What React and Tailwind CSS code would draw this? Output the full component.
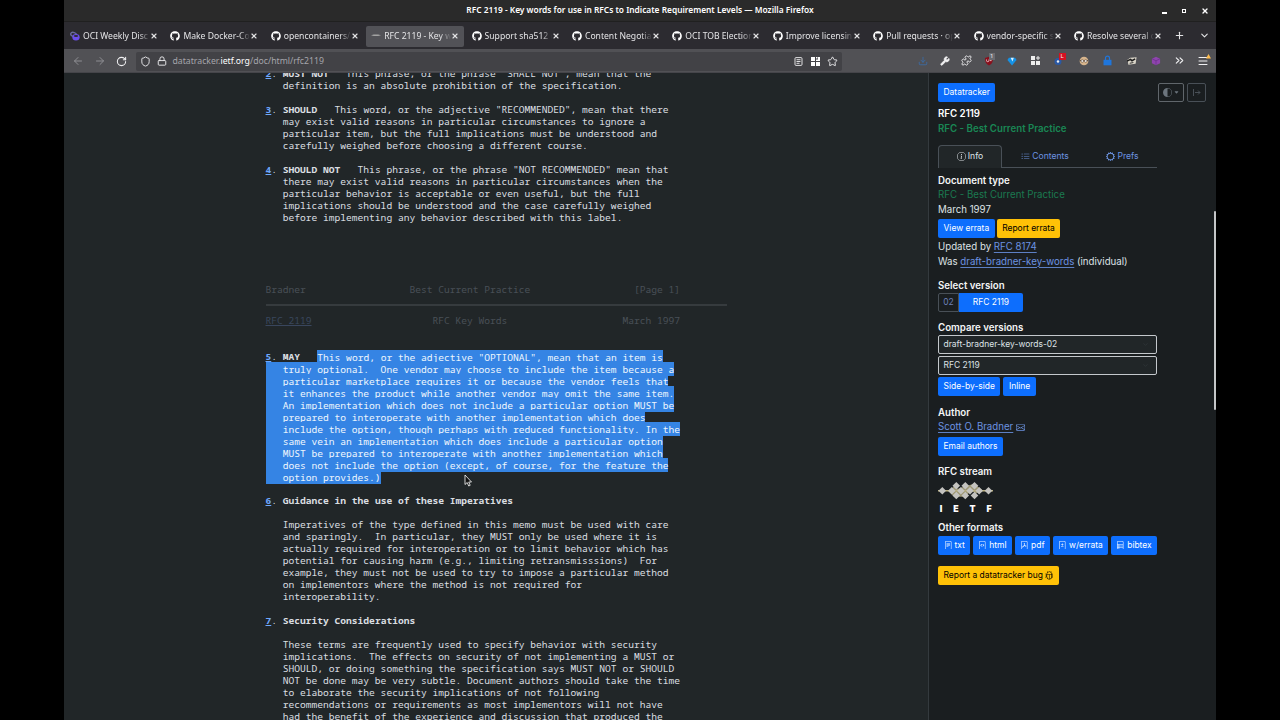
import { BsInfoCircle, BsListUl, BsGearWide, BsEnvelope, BsFileText, BsFileCode, BsFilePdf, BsFileDiff, BsFileRuled, BsBug, BsCircleHalf, BsCaretDownFill } from "react-icons/bs";
import { FaGithub } from "react-icons/fa";
import { Wrench, Puzzle, Star, Shield, Lock, RotateCw, ArrowLeft, ArrowRight, Plus, ChevronDown, ChevronsRight, X, Download, Menu } from "lucide-react";

const tabs = [
  { title: "OCI Weekly Disc", icon: "oci" },
  { title: "Make Docker-Co", icon: "github" },
  { title: "opencontainers/d", icon: "github" },
  { title: "RFC 2119 - Key w", icon: "ietf", active: true },
  { title: "Support sha512 d", icon: "github" },
  { title: "Content Negotia", icon: "github" },
  { title: "OCI TOB Election", icon: "github" },
  { title: "Improve licensin", icon: "github" },
  { title: "Pull requests · op", icon: "github" },
  { title: "vendor-specific s", icon: "github" },
  { title: "Resolve several c", icon: "github" },
];

const selectedLines = [
  `This word, or the adjective "OPTIONAL", mean that an item is`,
  "   truly optional.  One vendor may choose to include the item because a",
  "   particular marketplace requires it or because the vendor feels that",
  "   it enhances the product while another vendor may omit the same item.",
  "   An implementation which does not include a particular option MUST be",
  "   prepared to interoperate with another implementation which does",
  "   include the option, though perhaps with reduced functionality. In the",
  "   same vein an implementation which does include a particular option",
  "   MUST be prepared to interoperate with another implementation which",
  "   does not include the option (except, of course, for the feature the",
  "   option provides.)",
];

function TabIcon({ icon }) {
  if (icon === "oci") {
    return (
      <svg className="size-[10px] shrink-0" viewBox="0 0 11 11">
        <ellipse cx="4" cy="3.8" rx="3.3" ry="2.2" fill="none" stroke="#6a6a9c" strokeWidth="1.5" transform="rotate(20 4 3.8)" />
        <ellipse cx="6.6" cy="6.8" rx="4" ry="3.6" fill="#6b4eea" />
        <ellipse cx="6.6" cy="5.4" rx="2.4" ry="1.1" fill="#2b2a33" />
      </svg>
    );
  }
  if (icon === "ietf") {
    return (
      <svg className="size-[10px] shrink-0" viewBox="0 0 11 11">
        <path d="M0 4.700L3 3.800l5 0 3 .9-3 .8H3z" fill="#a3a3a3" />
      </svg>
    );
  }
  return <FaGithub className="size-[10px] shrink-0 text-white" />;
}

function TitleBar() {
  return (
    <div className="flex h-[22px] items-center border-b border-[#202020] bg-[#2a2a2a]">
      <div className="w-[60px]" />
      <div className="flex-1 text-center text-[8.350px] font-semibold text-white">
        RFC 2119 - Key words for use in RFCs to Indicate Requirement Levels — Mozilla Firefox
      </div>
      <div className="flex w-[60px] items-center justify-end gap-[15px] pr-[7px] text-white">
        <span className="mt-[5px] h-[1.5px] w-[5px] bg-white" />
        <span className="size-[4px] border border-white" />
        <X className="size-[8px]" strokeWidth={4} />
      </div>
    </div>
  );
}

function TabStrip() {
  return (
    <div className="flex h-[27px] items-center bg-[#2c2b30] text-[#e4e4e6]">
      {tabs.map((tab) => (
        <div
          key={tab.title}
          className={`mx-[2px] mt-px flex h-[21px] w-[96.400px] shrink-0 items-center rounded-[2px] pl-[4px] ${tab.active ? "ml-[1px] w-[97.400px] bg-[#525257] pl-[5px]" : ""}`}
        >
          <TabIcon icon={tab.icon} />
          <span className="ml-[3px] w-[67px] whitespace-nowrap text-[8.600px] [mask-image:linear-gradient(to_right,black_84%,transparent)]">
            {tab.title}
          </span>
          <X className="size-[8px] shrink-0" strokeWidth={3.4} />
        </div>
      ))}
      <Plus className="ml-[6px] size-[11px] shrink-0" strokeWidth={2.4} />
      <ChevronDown className="ml-[14px] size-[11px] shrink-0" strokeWidth={2.4} />
    </div>
  );
}

function Slot({ narrow, children }) {
  return (
    <span className={`relative flex shrink-0 items-center justify-center ${narrow ? "w-[22px]" : "w-[24px]"}`}>
      {children}
    </span>
  );
}

function Extensions() {
  return (
    <div className="ml-[70px] flex items-center text-[#f0f0f2]">
      <Slot narrow><Download className="size-[10px] text-[#3b6ea8]" /></Slot>
      <Slot narrow><Wrench className="size-[10px]" fill="currentColor" /></Slot>
      <Slot narrow><Puzzle className="size-[11px]" /></Slot>
      <Slot narrow>
        <svg className="size-[10px]" viewBox="0 0 10 10">
          <path d="M5 .8l4 1.300c0 3.900-1 6-4 7.300C2 8.100 1 6 1 2.100z" fill="#8a0f1c" />
          <path d="M2.500 3.500v1a1.200 1.200 0 0 0 2.400 0v-1M5.800 4.600h1.800" stroke="#e8c8cc" strokeWidth=".9" fill="none" />
        </svg>
        <span className="absolute -top-[3px] left-[11px] bg-[#6b6b70] px-[1.5px] text-[6px] leading-[7px]">1</span>
      </Slot>
      <Slot>
        <svg className="size-[10px]" viewBox="0 0 11 11">
          <path d="M2 2h7l1.500 2.500L5.500 10.500.5 4.500z" fill="#1592e6" />
          <path d="M4 2h3.500L6 6z" fill="#d8f0ff" />
        </svg>
      </Slot>
      <Slot>
        <svg className="size-[11px]" viewBox="0 0 11 11" fill="#eeeeee">
          <path d="M1 1h4v4H1zM1 6h4v4H1zM6 6h4v4H6zM7.500 1h1v1.500H10v1H8.500V5h-1V3.500H6v-1h1.500z" />
        </svg>
      </Slot>
      <Slot>
        <svg className="size-[11px]" viewBox="0 0 11 11">
          <circle cx="4" cy="6.500" r="3.500" fill="#2b59a5" />
          <circle cx="4" cy="6.500" r="1.200" fill="#eeeeee" />
        </svg>
        <span className="absolute -top-[2px] left-[11px] bg-[#d41122] px-[2px] text-[6px] leading-[7px]">L</span>
      </Slot>
      <Slot>
        <svg className="size-[10px]" viewBox="0 0 11 11">
          <circle cx="5.500" cy="5.500" r="4.800" fill="#d6b48c" />
          <path d="M1 5h9" stroke="#5a4636" />
          <circle cx="3.600" cy="5.500" r="1.500" fill="#eeeeee" stroke="#5a4636" strokeWidth=".6" />
          <circle cx="7.400" cy="5.500" r="1.500" fill="#eeeeee" stroke="#5a4636" strokeWidth=".6" />
        </svg>
      </Slot>
      <Slot>
        <svg className="size-[11px]" viewBox="0 0 11 11">
          <path d="M3.500 5V3.200a2 2 0 0 1 4 0V5" fill="none" stroke="#1f76dc" strokeWidth="1.200" />
          <rect x="1.500" y="4.800" width="8" height="5.500" fill="#1f76dc" />
        </svg>
      </Slot>
      <Slot>
        <svg className="size-[10px]" viewBox="0 0 11 11">
          <path d="M.5 4l3-2 7-.5-1 7-8 1z" fill="#d9d4c8" />
          <path d="M0 5.500l4-1.800 1.500 1.500 3.500-2" stroke="#1c1c1c" strokeWidth="1.600" fill="none" />
          <path d="M3 8l4-.8" stroke="#222222" fill="none" />
        </svg>
      </Slot>
      <Slot>
        <svg className="size-[10px]" viewBox="0 0 11 11">
          <path d="M5.500.8l4.500 2.200v5L5.500 10.300 1 8V3z" fill="#8e44ad" />
          <path d="M1 3l4.500 2.300L10 3M5.500 5.300v5" stroke="#6c2f8c" fill="none" strokeWidth=".8" />
        </svg>
      </Slot>
      <Slot><ChevronsRight className="size-[13px]" /></Slot>
      <Slot narrow>
        <Menu className="size-[12px]" />
        <svg className="absolute -top-[1px] right-[3px] size-[5px]" viewBox="0 0 5 5">
          <path d="M2.500 0L5 4.500H0z" fill="#ffbd4f" />
        </svg>
      </Slot>
    </div>
  );
}

function NavBar() {
  return (
    <div className="flex h-[24px] items-center border-b border-[#45454a] bg-[#515155] text-[#f0f0f2]">
      <div className="mt-px flex w-[71.500px] shrink-0 items-center gap-[10px] pl-[8px]">
        <ArrowLeft className="size-[12px] text-[#8e8e93]" strokeWidth={2} />
        <ArrowRight className="size-[12px] text-[#8e8e93]" strokeWidth={2} />
        <RotateCw className="size-[11px]" strokeWidth={2.3} />
      </div>
      <div className="mt-px flex h-[19px] w-[706px] shrink-0 items-center rounded-[2px] bg-[#424246] pl-[4px] pr-[4px]">
        <Shield className="size-[11px]" strokeWidth={2} />
        <Lock className="ml-[6px] size-[10px]" strokeWidth={2.2} />
        <span className="ml-[6px] flex-1 pt-px text-[8.700px] text-[#a5a5ab]">
          datatracker.<span className="text-white">ietf.org</span>/doc/html/rfc2119
        </span>
        <svg className="size-[9px]" viewBox="0 0 9 9" fill="none" stroke="currentColor" strokeWidth=".9">
          <rect x="1" y=".6" width="7" height="7.800" rx="1" />
          <path d="M2.500 2.700h4M2.500 4.500h4M2.500 6.300h3" />
        </svg>
        <svg className="ml-[8px] size-[9px]" viewBox="0 0 9 9" fill="#ffffff">
          <path d="M0 0h4v4H0zM0 5h4v4H0zM5 5h4v4H5zM5 0h1.500v1.500H5zM7 0h2v4H5V2.500h2z" />
        </svg>
        <Star className="ml-[7px] size-[11px]" strokeWidth={2} />
      </div>
      <Extensions />
    </div>
  );
}

function Num({ children }) {
  return <span className="font-bold text-[#6ea8fe] underline">{children}</span>;
}

function Document() {
  return (
    <div className="flex h-[647px] w-[864px] flex-col overflow-hidden bg-[#212628] pl-[201.500px] text-[#dadee1]">
      <pre className="-mt-[5px] shrink-0 font-['Noto_Sans_Mono','DejaVu_Sans_Mono',monospace] text-[9.600px] leading-[12px]">
        <Num>2</Num>. <b>MUST NOT</b>   This phrase, or the phrase "SHALL NOT", mean that the{"\n"}
        {`   definition is an absolute prohibition of the specification.\n\n`}
        <Num>3</Num>. <b>SHOULD</b>   This word, or the adjective "RECOMMENDED", mean that there{"\n"}
        {`   may exist valid reasons in particular circumstances to ignore a
   particular item, but the full implications must be understood and
   carefully weighed before choosing a different course.\n\n`}
        <Num>4</Num>. <b>SHOULD NOT</b>   This phrase, or the phrase "NOT RECOMMENDED" mean that{"\n"}
        {`   there may exist valid reasons in particular circumstances when the
   particular behavior is acceptable or even useful, but the full
   implications should be understood and the case carefully weighed
   before implementing any behavior described with this label.\n\n\n\n\n\n`}
        <span className="text-[#495057]">{`Bradner                  Best Current Practice                  [Page 1]`}</span>
      </pre>
      <div className="mb-[9px] mt-[8px] h-[2px] w-[461px] shrink-0 bg-[#363b3e]" />
      <pre className="shrink-0 font-['Noto_Sans_Mono','DejaVu_Sans_Mono',monospace] text-[9.600px] leading-[12px]">
        <span className="text-[#495057]">
          <span className="text-[#39465d] underline">RFC 2119</span>
          {`                     RFC Key Words                    March 1997\n\n\n`}
        </span>
        <Num>5</Num>. <b>MAY</b>{"   "}
        {selectedLines.map((line) => (
          <span key={line}>
            <span className="bg-[#3584e4] py-[0.5px] text-[#eef6fd]">{line}</span>
            {"\n"}
          </span>
        ))}
        {"\n"}
        <Num>6</Num>. <b>Guidance in the use of these Imperatives</b>
        {`

   Imperatives of the type defined in this memo must be used with care
   and sparingly.  In particular, they MUST only be used where it is
   actually required for interoperation or to limit behavior which has
   potential for causing harm (e.g., limiting retransmisssions)  For
   example, they must not be used to try to impose a particular method
   on implementors where the method is not required for
   interoperability.

`}
        <Num>7</Num>. <b>Security Considerations</b>
        {`

   These terms are frequently used to specify behavior with security
   implications.  The effects on security of not implementing a MUST or
   SHOULD, or doing something the specification says MUST NOT or SHOULD
   NOT be done may be very subtle. Document authors should take the time
   to elaborate the security implications of not following
   recommendations or requirements as most implementors will not have
   had the benefit of the experience and discussion that produced the
`}
      </pre>
    </div>
  );
}

function Button({ warning, children, className = "" }) {
  return (
    <span
      className={`inline-flex h-[19px] shrink-0 items-center justify-center gap-[2.5px] whitespace-nowrap rounded-[2px] px-[5.500px] text-[8.460px] ${warning ? "bg-[#ffc107] text-black" : "bg-[#0d6efd] text-white"} ${className}`}
    >
      {children}
    </span>
  );
}

function Select({ children }) {
  return (
    <div className="flex h-[19px] w-[219px] items-center justify-between rounded-[2px] border border-[#c4c8cc] bg-[#212628] px-[4.500px] text-[8.460px]">
      {children}
      <ChevronDown className="mr-[3px] size-[7px] text-[#343a3e]" />
    </div>
  );
}

function IetfLogo() {
  const diamonds = [
    [4.3, 10.7], [18.3, 5.7], [27.3, 5.7], [36.5, 5.7], [13.8, 10.7], [22.9, 10.7], [32, 10.7],
    [41.2, 10.7], [18.3, 15.5], [27.3, 15.5], [36.5, 15.5], [50.5, 10.7],
  ];
  const letters = [["I", 3], ["E", 18], ["T", 34.5], ["F", 51]];
  return (
    <svg className="block h-[34px] w-[56px]" viewBox="0 0 56 34">
      <path d="M10 10.700l6-4 4 2 6-2 10-3 8 6-6 4-4-3-8 6h-10z" fill="#9d9673" />
      <path d="M0 10.700h55" stroke="#b8ad7c" strokeWidth="1.500" />
      {diamonds.map(([x, y]) => (
        <path key={`${x}-${y}`} d={`M${x} ${y - 3.8}l3.8 3.8-3.8 3.8-3.8-3.8z`} fill="#c4c3bf" />
      ))}
      {letters.map(([letter, x]) => (
        <text key={letter} x={x} y="32.300" textAnchor="middle" fill="#ffffff" className="font-['Inter',sans-serif] text-[8.800px] font-black">
          {letter}
        </text>
      ))}
    </svg>
  );
}

function Sidebar() {
  const link = "text-[#6c93e0] underline decoration-[#5d80c4] underline-offset-[2px]";
  const heading = "font-semibold text-[#f4f5f6]";
  return (
    <div className="relative h-[647px] w-[288px] border-l border-[#343a3e] bg-[#1a1e20] pl-[9px] pt-[10px] font-['Inter',sans-serif] text-[9.700px] leading-[14.500px] text-[#dee2e6]">
      <div className="flex items-center pr-[10px]">
        <Button>Datatracker</Button>
        <div className="ml-auto flex gap-[3px] text-[#6c757d]">
          <span className="flex h-[19px] w-[26px] items-center justify-center gap-[2px] rounded-[2px] border border-[#60666b]">
            <BsCircleHalf className="size-[9px]" />
            <BsCaretDownFill className="size-[5px]" />
          </span>
          <span className="flex h-[19px] w-[19px] items-center justify-center rounded-[2px] border border-[#495057] text-[#495057]">
            <svg className="size-[9px]" viewBox="0 0 9 9" fill="none" stroke="currentColor">
              <path d="M1.500 1v7M3 4.500h5M6 2.500l2 2-2 2" />
            </svg>
          </span>
        </div>
      </div>
      <div className="mt-[5px] font-semibold text-white">RFC 2119</div>
      <div className="font-semibold text-[#198754]">RFC - Best Current Practice</div>
      <div className="mt-[8.500px] flex h-[23px] w-[219px] text-[8.600px] text-[#6c93e0]">
        <span className="flex w-[64px] items-center justify-center gap-[2px] rounded-t-[4px] border border-b-0 border-[#495057] bg-[#212628] text-[#dee2e6]">
          <BsInfoCircle className="size-[9px]" />Info
        </span>
        <span className="flex w-[86px] items-center justify-center gap-[2px] border-b border-[#495057] pt-px">
          <BsListUl className="size-[9px]" />Contents
        </span>
        <span className="flex flex-1 items-center justify-center gap-[2px] border-b border-[#495057] pt-px">
          <BsGearWide className="size-[9px]" />Prefs
        </span>
      </div>
      <div className={`mt-[6px] ${heading}`}>Document type</div>
      <div className="text-[#1b7a50]">RFC - Best Current Practice</div>
      <div>March 1997</div>
      <div className="mt-[1.5px] flex gap-[2px]">
        <Button>View errata</Button>
        <Button warning>Report errata</Button>
      </div>
      <div className="mt-[2.5px]">Updated by <span className={link}>RFC 8174</span></div>
      <div>Was <span className={link}>draft-bradner-key-words</span> (individual)</div>
      <div className={`mt-[9.5px] ${heading}`}>Select version</div>
      <div className="-mt-[0.5px] flex">
        <span className="flex h-[19px] w-[21px] items-center justify-center rounded-l-[2px] border border-[#495057] text-[8.460px] text-[#6d80b8]">02</span>
        <Button className="w-[64px] rounded-l-none">RFC 2119</Button>
      </div>
      <div className={`mt-[9px] ${heading}`}>Compare versions</div>
      <Select>draft-bradner-key-words-02</Select>
      <div className="h-[2px]" />
      <Select>RFC 2119</Select>
      <div className="mt-[2px] flex gap-[3px]">
        <Button>Side-by-side</Button>
        <Button>Inline</Button>
      </div>
      <div className={`mt-[9.5px] ${heading}`}>Author</div>
      <div className="flex h-[14.5px] items-center gap-[3px] text-[#6c93e0]">
        <span className={link}>Scott O. Bradner</span>
        <BsEnvelope className="size-[9px]" />
      </div>
      <div className="mt-[2px] flex"><Button>Email authors</Button></div>
      <div className={`mt-[9.5px] ${heading}`}>RFC stream</div>
      <IetfLogo />
      <div className={`mt-[7.5px] ${heading}`}>Other formats</div>
      <div className="flex gap-[2.5px]">
        <Button><BsFileText className="size-[8.5px]" />txt</Button>
        <Button><BsFileCode className="size-[8.5px]" />html</Button>
        <Button><BsFilePdf className="size-[8.5px]" />pdf</Button>
        <Button><BsFileDiff className="size-[8.5px]" />w/errata</Button>
        <Button><BsFileRuled className="size-[8.5px]" />bibtex</Button>
      </div>
      <div className="mt-[11.500px] flex">
        <Button warning>Report a datatracker bug <BsBug className="size-[8.5px]" /></Button>
      </div>
      <div className="absolute right-0 top-[138px] h-[199px] w-[2px] rounded-full bg-[#c4c6c8]" />
    </div>
  );
}

export default function App() {
  return (
    <div className="flex h-[720px] w-[1280px] justify-center overflow-hidden bg-black">
      <div className="relative flex w-[1152px] flex-col overflow-hidden font-['Noto_Sans',sans-serif]">
        <TitleBar />
        <TabStrip />
        <NavBar />
        <div className="flex">
          <Document />
          <Sidebar />
        </div>
        {/* mouse pointer */}
        <svg className="absolute left-[400px] top-[474px] h-[13px] w-[8px]" viewBox="0 0 8 13">
          <path d="M1 1v9.500l2.200-2 1.500 3.500 1.500-.7-1.500-3.300H7.500z" fill="#111111" stroke="#ffffff" strokeWidth=".8" />
        </svg>
      </div>
    </div>
  );
}
